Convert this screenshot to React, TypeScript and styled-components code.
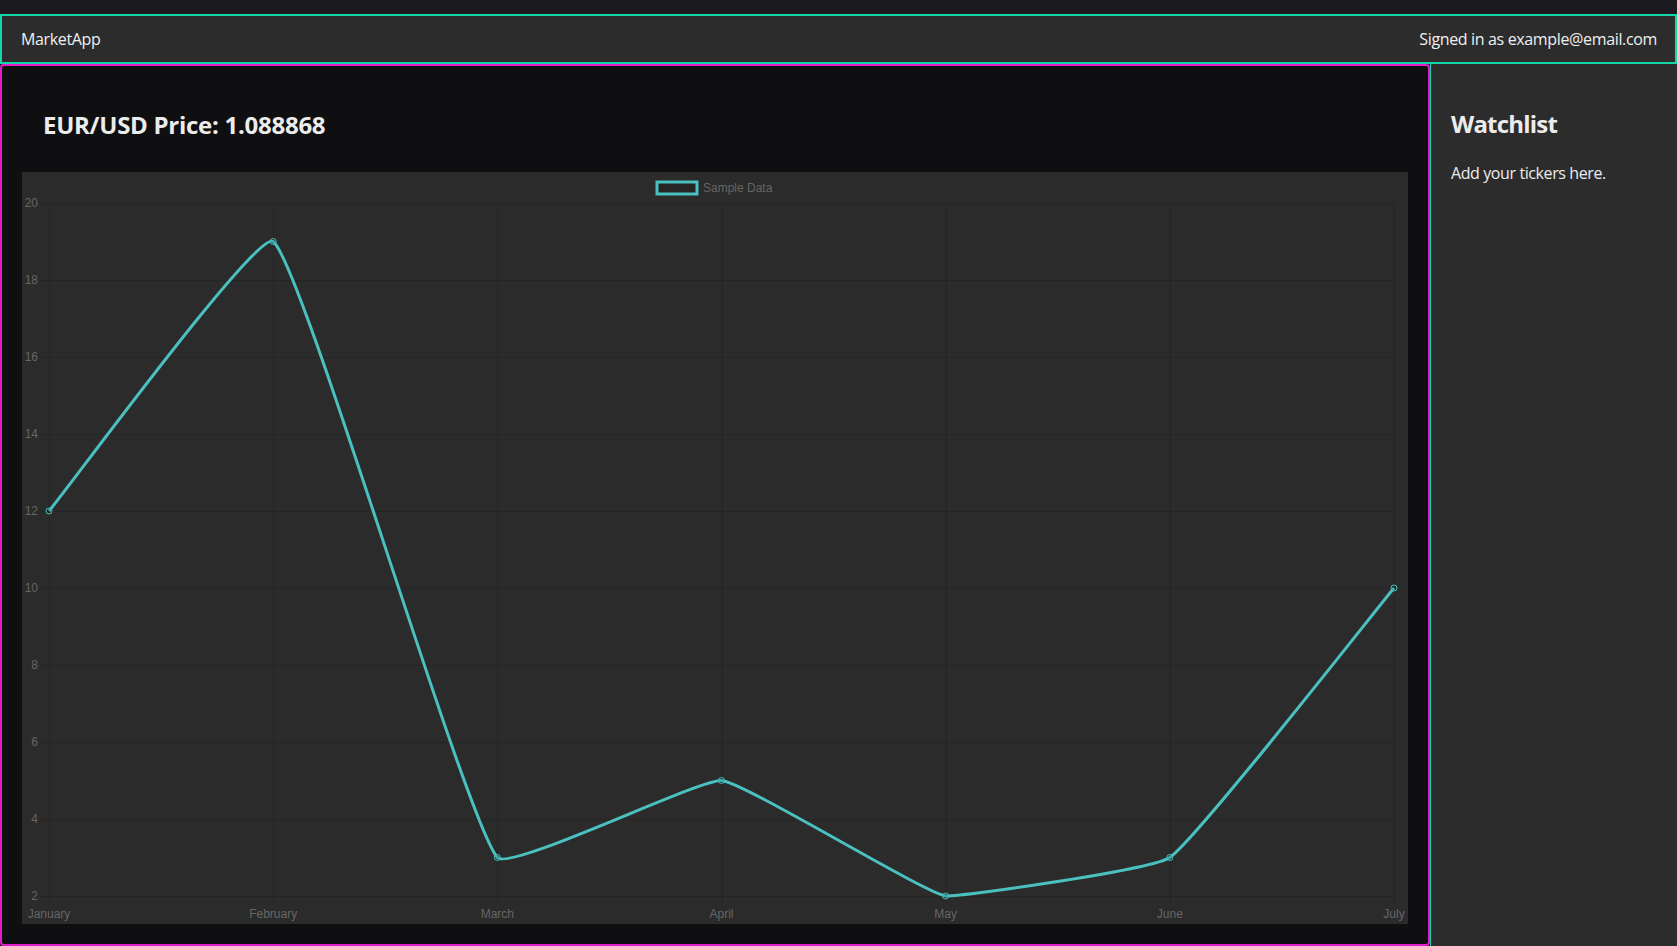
import React from "react";
import styled, { createGlobalStyle } from "styled-components";

const labels = ["January", "February", "March", "April", "May", "June", "July"];
const values = [12, 19, 3, 5, 2, 3, 10];

const W = 1386;
const H = 752;
const area = { left: 27, right: 1372, top: 31, bottom: H - 28 };
const yTicks = [2, 4, 6, 8, 10, 12, 14, 16, 18, 20];
const lineColor = "rgb(75, 192, 192)";

const xAt = (i: number) => area.left + (i * (area.right - area.left)) / (labels.length - 1);
const yAt = (v: number) => area.bottom - ((v - 2) / 18) * (area.bottom - area.top);

type Pt = { x: number; y: number; c1x: number; c1y: number; c2x: number; c2y: number };

// same spline maths as chart.js (small tension, control points capped to the plot area)
function buildPoints(tension: number): Pt[] {
  const base = values.map((v, i) => ({ x: xAt(i), y: yAt(v) }));
  const clamp = (v: number, lo: number, hi: number) => Math.max(lo, Math.min(hi, v));
  return base.map((p, i) => {
    const prev = base[Math.max(i - 1, 0)];
    const next = base[Math.min(i + 1, base.length - 1)];
    const d01 = Math.hypot(p.x - prev.x, p.y - prev.y);
    const d12 = Math.hypot(next.x - p.x, next.y - p.y);
    const s01 = d01 + d12 === 0 ? 0 : d01 / (d01 + d12);
    const s12 = d01 + d12 === 0 ? 0 : d12 / (d01 + d12);
    const fa = tension * s01;
    const fb = tension * s12;
    return {
      x: p.x,
      y: p.y,
      c1x: clamp(p.x - fa * (next.x - prev.x), area.left, area.right),
      c1y: clamp(p.y - fa * (next.y - prev.y), area.top, area.bottom),
      c2x: clamp(p.x + fb * (next.x - prev.x), area.left, area.right),
      c2y: clamp(p.y + fb * (next.y - prev.y), area.top, area.bottom),
    };
  });
}

function linePath(pts: Pt[]) {
  let d = `M ${pts[0].x} ${pts[0].y}`;
  for (let i = 1; i < pts.length; i++) {
    const a = pts[i - 1];
    const b = pts[i];
    d += ` C ${a.c2x} ${a.c2y} ${b.c1x} ${b.c1y} ${b.x} ${b.y}`;
  }
  return d;
}

function PriceChart() {
  const pts = buildPoints(0.1);
  return (
    <ChartBox>
      <svg width="100%" height="100%" viewBox={`0 0 ${W} ${H}`} preserveAspectRatio="none">
        {/* legend */}
        <rect x={635} y={10} width={40} height={12} fill="rgba(0,0,0,0.1)" stroke={lineColor} strokeWidth={3} />
        <ChartText x={681} y={20}>Sample Data</ChartText>

        {/* grid */}
        {yTicks.map((t) => (
          <line key={`h${t}`} x1={area.left - 8} x2={area.right} y1={Math.round(yAt(t)) + 0.5} y2={Math.round(yAt(t)) + 0.5} stroke="rgba(0,0,0,0.12)" />
        ))}
        {labels.map((l, i) => (
          <line key={`v${l}`} x1={Math.round(xAt(i)) + 0.5} x2={Math.round(xAt(i)) + 0.5} y1={area.top} y2={area.bottom + 8} stroke="rgba(0,0,0,0.12)" />
        ))}

        {/* ticks */}
        {yTicks.map((t) => (
          <ChartText key={`yt${t}`} x={area.left - 11} y={yAt(t) + 4} textAnchor="end">
            {t}
          </ChartText>
        ))}
        {labels.map((l, i) => (
          <ChartText key={`xt${l}`} x={xAt(i)} y={area.bottom + 22} textAnchor="middle">
            {l}
          </ChartText>
        ))}

        <path d={linePath(pts)} fill="none" stroke={lineColor} strokeWidth={3} />
        {pts.map((p, i) => (
          <circle key={i} cx={p.x} cy={p.y} r={3} fill="rgba(0,0,0,0.1)" stroke={lineColor} strokeWidth={1} />
        ))}
      </svg>
    </ChartBox>
  );
}

export default function App() {
  return (
    <Page>
      <GlobalStyle />
      <Navbar>
        <Brand>MarketApp</Brand>
        <UserInfo>Signed in as example@email.com</UserInfo>
      </Navbar>
      <Content>
        <MainPanel>
          <PriceTitle>EUR/USD Price: 1.088868</PriceTitle>
          <PriceChart />
        </MainPanel>
        <Sidebar>
          <SideTitle>Watchlist</SideTitle>
          <SideText>Add your tickers here.</SideText>
        </Sidebar>
      </Content>
    </Page>
  );
}

const GlobalStyle = createGlobalStyle`
  html, body {
    margin: 0;
    padding: 0;
    background: #1b1b1f;
    overflow: hidden;
  }
  body {
    font-family: "Open Sans", "Noto Sans", sans-serif;
    color: #ececec;
  }
`;

const Page = styled.div`
  height: 946px;
  padding-top: 14px;
  box-sizing: border-box;
  display: flex;
  flex-direction: column;
`;

const Navbar = styled.header`
  height: 50px;
  box-sizing: border-box;
  display: flex;
  align-items: center;
  justify-content: space-between;
  padding: 0 18px 0 19px;
  background: #2c2c2c;
  border: 2px solid #14d6a8;
  font-size: 16px;
  letter-spacing: -0.35px;
`;

const Brand = styled.span`
  color: #f0f0f0;
`;

const UserInfo = styled.span`
  color: #f0f0f0;
`;

const Content = styled.div`
  flex: 1;
  display: flex;
  min-height: 0;
`;

const MainPanel = styled.main`
  width: 1430px;
  box-sizing: border-box;
  display: flex;
  flex-direction: column;
  padding: 20px;
  background: #0f0f11;
  border: 2px solid #e21ccb;
  border-radius: 4px;
`;

const PriceTitle = styled.h2`
  margin: 23px 0 31px 21px;
  font-size: 24px;
  line-height: 32px;
  font-weight: 700;
  letter-spacing: -0.27px;
  color: #ececec;
`;

const ChartBox = styled.div`
  flex: 1;
  background: #2b2b2b;
  svg {
    display: block;
  }
`;

const ChartText = styled.text`
  font-family: "Liberation Sans", Arial, sans-serif;
  font-size: 12px;
  fill: #666;
`;

const Sidebar = styled.aside`
  flex: 1;
  padding: 20px;
  background: #2c2c2c;
  border-left: 1px solid #14d6a8;
`;

const SideTitle = styled.h2`
  margin: 24px 0 0;
  font-size: 24px;
  line-height: 32px;
  font-weight: 700;
  letter-spacing: -0.8px;
  color: #ececec;
`;

const SideText = styled.p`
  margin: 21px 0 0;
  font-size: 16px;
  line-height: 24px;
  letter-spacing: -0.4px;
  color: #ececec;
`;
